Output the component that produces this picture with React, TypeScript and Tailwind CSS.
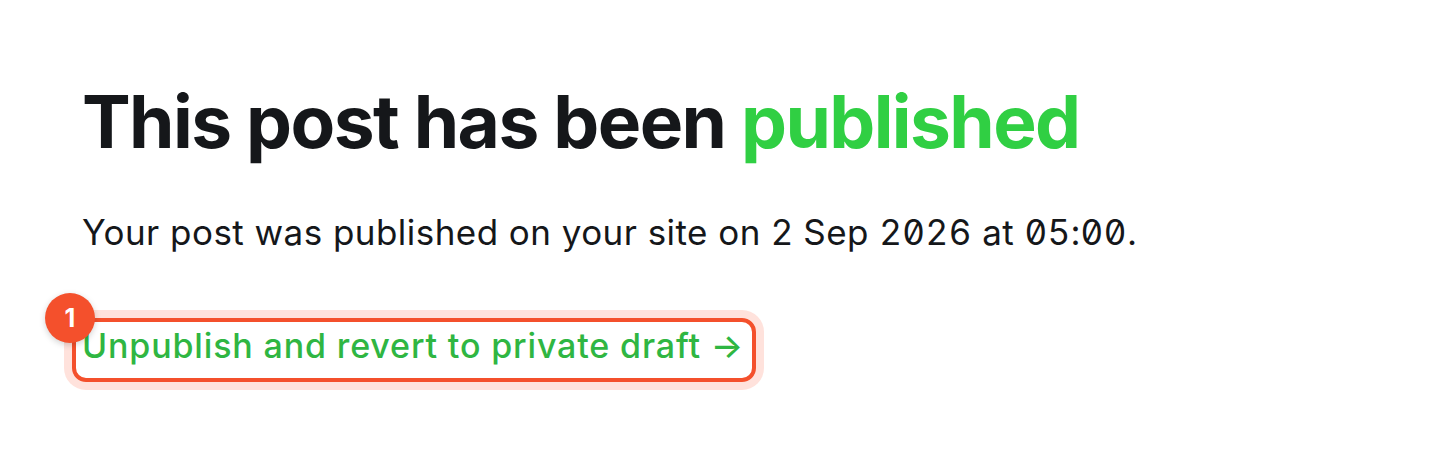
import * as React from 'react';

// ── Annotation overlay ───────────────────────────────────────────────────────

function Annotation({ index }: { index: number }) {
  return (
    <>
      <span className="pointer-events-none absolute -left-[10px] -right-[12px] -top-[8px] -bottom-[16px] rounded-[14px] border-[4px] border-[#f4502c] shadow-[0_0_0_8px_#ffe2dc]" />
      <span className="pointer-events-none absolute -left-[37px] -top-[33px] flex size-[50px] items-center justify-center rounded-full bg-[#f4502c] text-[25px] font-bold tracking-normal text-white shadow-[0_2px_6px_rgba(0,0,0,0.18)]">
        {index}
      </span>
    </>
  );
}

// ── Main Component ───────────────────────────────────────────────────────────

export default function App() {
  return (
    <div className="min-h-[460px] w-full bg-white font-['Inter',sans-serif] text-[#15171a]">
      <div className="px-[82px] pt-[78px]">
        <h1 className="text-[73px] font-bold leading-[88px] tracking-[-0.022em]">
          This post has been <span className="text-[#30cf43]">published</span>
        </h1>

        <p className="mt-[44px] text-[35px] leading-[44px] tracking-[0.013em] text-[#15171a]">
          Your post was published on your site on 2 Sep{' '}
          <span className="[font-feature-settings:'tnum','zero']">2026</span> at{' '}
          <span className="[font-feature-settings:'tnum','zero']">05:00</span>.
        </p>

        <div className="mt-[72px]">
          <a href="#" className="relative inline-block text-[34px] font-medium leading-[40px] tracking-[0.025em] text-[#2fb642]">
            Unpublish and revert to private draft →
            <Annotation index={1} />
          </a>
        </div>
      </div>
    </div>
  );
}
